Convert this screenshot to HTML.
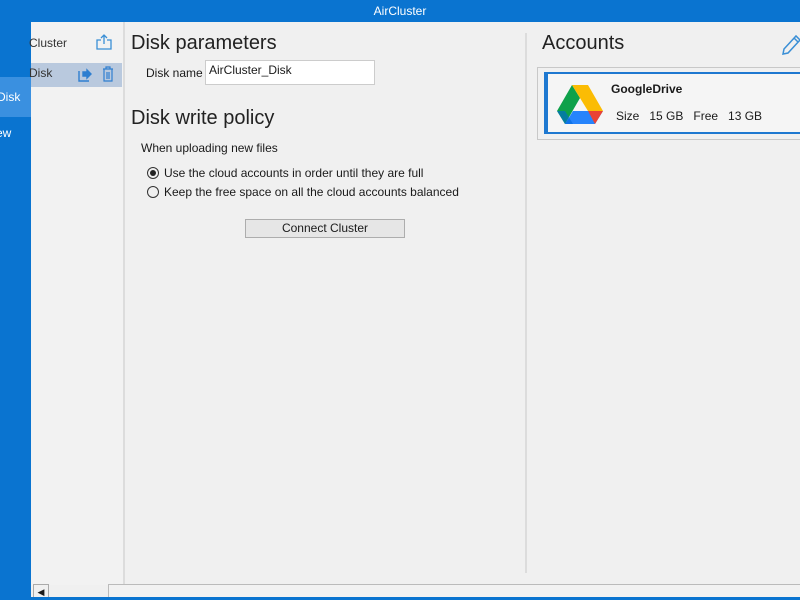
<!DOCTYPE html>
<html><head><style>
*{margin:0;padding:0;box-sizing:border-box}
body{width:800px;height:600px;overflow:hidden;background:#f0f0f0;font-family:"Liberation Sans",sans-serif;position:relative;color:#1a1a1a}
.a{position:absolute}
</style></head><body>
<div class="a" style="left:0;top:0;width:800px;height:22px;background:#0a74d0;color:#fff;font-size:12px;text-align:center;line-height:23px">AirCluster</div>
<div class="a" style="left:0;top:22px;width:31px;height:578px;background:#0a74d0"></div>
<div class="a" style="left:0;top:77px;width:31px;height:40px;background:#3a90e0;color:#fff;font-size:12px;line-height:40px;overflow:hidden"><span style="margin-left:-3px">Disk</span></div>
<div class="a" style="left:-4px;top:126px;color:#fff;font-size:12px">ew</div>
<div class="a" style="left:31px;top:22px;width:93px;height:563px;background:#f2f2f2"></div>
<div class="a" style="left:123px;top:22px;width:2px;height:563px;background:#dcdcdc"></div>
<div class="a" style="left:29px;top:36px;font-size:12px;color:#333">Cluster</div>
<svg class="a" style="left:95px;top:33px" width="18" height="18" viewBox="0 0 18 18" fill="none" stroke="#3a8fd6" stroke-width="1.3"><path d="M6 7H2v9h14V7h-4M9 11V2M6 5l3-3 3 3"/></svg>
<div class="a" style="left:31px;top:63px;width:91px;height:24px;background:#b9c9de"></div>
<div class="a" style="left:29px;top:66px;font-size:12px;color:#333">Disk</div>
<svg class="a" style="left:78px;top:68px" width="14" height="14" viewBox="0 0 14 14" fill="none" stroke="#2f7fd0" stroke-width="1.4"><path d="M9 2v2H5v4h4v2l4-4z" fill="#2f7fd0"/><path d="M1 3v10h10"/></svg>
<svg class="a" style="left:102px;top:66px" width="12" height="16" viewBox="0 0 12 16" fill="none" stroke="#2f7fd0" stroke-width="1.2"><path d="M1 3h10M4 3V1h4v2M2 3v12h8V3M5 6v7M7 6v7"/></svg>
<div class="a" style="left:131px;top:32px;font-size:20px;color:#222">Disk parameters</div>
<div class="a" style="left:146px;top:66px;font-size:12px">Disk name</div>
<div class="a" style="left:205px;top:60px;width:170px;height:25px;background:#fff;border:1px solid #ccc;font-size:12px;padding:2px 3px">AirCluster_Disk</div>
<div class="a" style="left:131px;top:107px;font-size:20px;color:#222">Disk write policy</div>
<div class="a" style="left:141px;top:141px;font-size:12px">When uploading new files</div>
<div class="a" style="left:147px;top:167px;width:12px;height:12px;border:1px solid #333;border-radius:50%"><div style="margin:2px;width:6px;height:6px;border-radius:50%;background:#222"></div></div>
<div class="a" style="left:164px;top:166px;font-size:12px">Use the cloud accounts in order until they are full</div>
<div class="a" style="left:147px;top:186px;width:12px;height:12px;border:1px solid #333;border-radius:50%"></div>
<div class="a" style="left:164px;top:185px;font-size:12px">Keep the free space on all the cloud accounts balanced</div>
<div class="a" style="left:245px;top:219px;width:160px;height:19px;background:#e6e6e6;border:1px solid #adadad;font-size:12px;text-align:center;line-height:17px">Connect Cluster</div>
<div class="a" style="left:525px;top:33px;width:2px;height:540px;background:#dcdcdc"></div>
<div class="a" style="left:542px;top:32px;font-size:20px;color:#222">Accounts</div>
<svg class="a" style="left:781px;top:33px" width="22" height="24" viewBox="0 0 22 24" fill="none" stroke="#3a8fd6" stroke-width="1.5"><path d="M3 16L15 3l4 4L7 20l-5 1z M13 5l4 4"/></svg>
<div class="a" style="left:537px;top:67px;width:270px;height:73px;border:1px solid #c8c8c8;background:#f0f0f0"></div>
<div class="a" style="left:544px;top:72px;width:260px;height:62px;border:2px solid #1e78d0;border-left:4px solid #1e78d0;border-right:none;background:#f5f5f5"></div>
<svg class="a" style="left:557px;top:84px" width="46" height="40" viewBox="0 0 46 40"><path d="M15 1L0 27l8 13 15-26z" fill="#0ea14a"/><path d="M15 1h16l15 26H31z" fill="#fbbc04"/><path d="M8 40h30l8-13H16z" fill="#2684fc"/><path d="M38 40l8-13H31z" fill="#ea4335"/><path d="M0 27l8 13h8l-8-13z" fill="#0066da" opacity=".6"/></svg>
<div class="a" style="left:611px;top:82px;font-size:12px;font-weight:bold">GoogleDrive</div>
<div class="a" style="left:616px;top:109px;font-size:12px">Size&nbsp;&nbsp;&nbsp;15 GB&nbsp;&nbsp;&nbsp;Free&nbsp;&nbsp;&nbsp;13 GB</div>
<div class="a" style="left:31px;top:585px;width:769px;height:15px;background:#f0f0f0"></div>
<div class="a" style="left:33px;top:584px;width:16px;height:16px;border:1px solid #aaa;font-size:9px;text-align:center;line-height:14px">◀</div>
<div class="a" style="left:108px;top:584px;width:692px;height:14px;border:1px solid #bbb;border-right:none;background:#f2f2f2"></div>
<div class="a" style="left:31px;top:597px;width:769px;height:3px;background:#0a74d0"></div>
</body></html>
